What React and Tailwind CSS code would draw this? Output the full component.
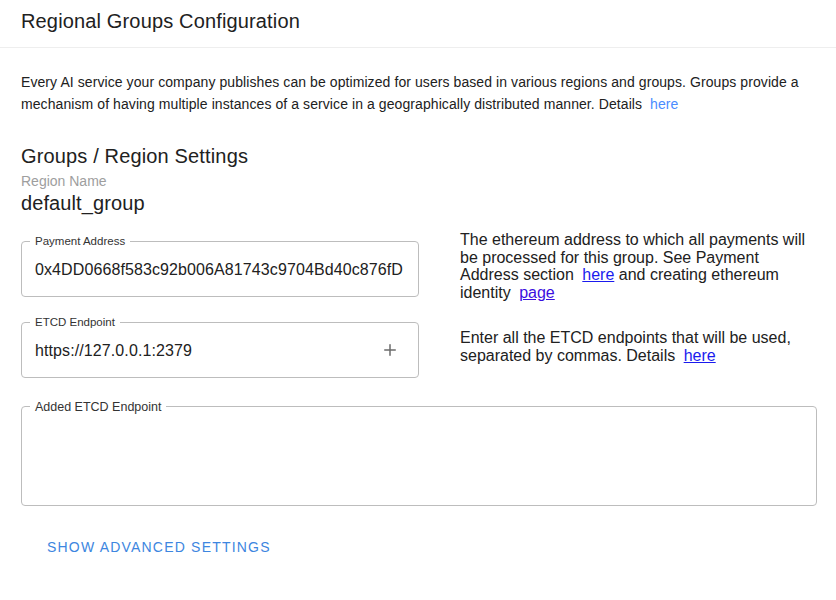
import React from 'react';
import { Plus } from 'lucide-react';

// Outlined field with a notched label, like a material text field
const OutlinedField = ({ label, legendClass = 'text-[11.5px]', className = '', children }) => (
  <fieldset className={`border border-[#bdbdbd] rounded-[4px] ${className}`}>
    <legend className={`ml-[8px] px-[5px] leading-[13px] text-[#333333] ${legendClass}`}>{label}</legend>
    {children}
  </fieldset>
);

const App = () => {
  return (
    <div className="min-h-[600px] bg-white text-[#212121] font-['Liberation_Sans',Arial,sans-serif]">
      {/* Header */}
      <div className="h-[48px] border-b border-[#eeeeee] px-[21px] pt-[9px]">
        <h1 className="text-[20px] leading-[24px] tracking-[0.15px]">Regional Groups Configuration</h1>
      </div>

      <div className="pl-[21px] pr-[19px]">
        <p className="mt-[23px] text-[14px] leading-[22px] tracking-[0.08px]">
          Every AI service your company publishes can be optimized for users based in various regions and groups. Groups provide a mechanism of having multiple instances of a service in a geographically distributed manner. Details{' '}
          <a href="#" className="ml-[4px] text-[#4a8cff]">here</a>
        </p>

        <h2 className="mt-[29px] text-[20px] leading-[24px] tracking-[0.15px]">Groups / Region Settings</h2>
        <div className="mt-[4px] text-[14px] leading-[18px] text-[#9e9e9e]">Region Name</div>
        <div className="mt-[1px] text-[20px] leading-[24px] tracking-[0.1px]">default_group</div>

        {/* Payment address row */}
        <div className="mt-[16px] flex items-center gap-[41px]">
          <OutlinedField label="Payment Address" className="w-[398px] shrink-0">
            <div className="pl-[13px] pr-[10px] pt-[12px] pb-[17px] text-[16px] leading-[19px] tracking-[0.1px] whitespace-nowrap overflow-hidden">
              0x4DD0668f583c92b006A81743c9704Bd40c876fD
            </div>
          </OutlinedField>
          <p className="w-[352px] text-[16px] leading-[17.7px]">
            The ethereum address to which all payments will be processed for this group. See Payment Address section{' '}
            <a href="#" className="ml-[4px] underline text-[#1a1aee]">here</a> and creating ethereum identity{' '}
            <a href="#" className="ml-[4px] underline text-[#3b0fe0]">page</a>
          </p>
        </div>

        {/* ETCD endpoint row */}
        <div className="mt-[14px] flex items-center gap-[41px]">
          <OutlinedField label="ETCD Endpoint" className="w-[398px] shrink-0">
            <div className="flex items-center justify-between pl-[13px] pr-[19px] pt-[12px] pb-[17px]">
              <span className="text-[16px] leading-[19px] tracking-[0.1px]">https://127.0.0.1:2379</span>
              <Plus className="w-[18px] h-[18px] text-[#6b6b6b]" strokeWidth={2} />
            </div>
          </OutlinedField>
          <p className="w-[352px] text-[16px] leading-[17.7px]">
            Enter all the ETCD endpoints that will be used, separated by commas. Details{' '}
            <a href="#" className="ml-[4px] underline text-[#1a1aee]">here</a>
          </p>
        </div>

        {/* Added endpoints list */}
        <OutlinedField label="Added ETCD Endpoint" legendClass="text-[12.5px] leading-[14px]" className="mt-[22px] h-[106px]">
          <div />
        </OutlinedField>

        <button className="mt-[33px] ml-[26px] text-[14px] leading-[16px] tracking-[1.2px] uppercase text-[#3d86e0]">
          Show Advanced Settings
        </button>
      </div>
    </div>
  );
};

export default App;
